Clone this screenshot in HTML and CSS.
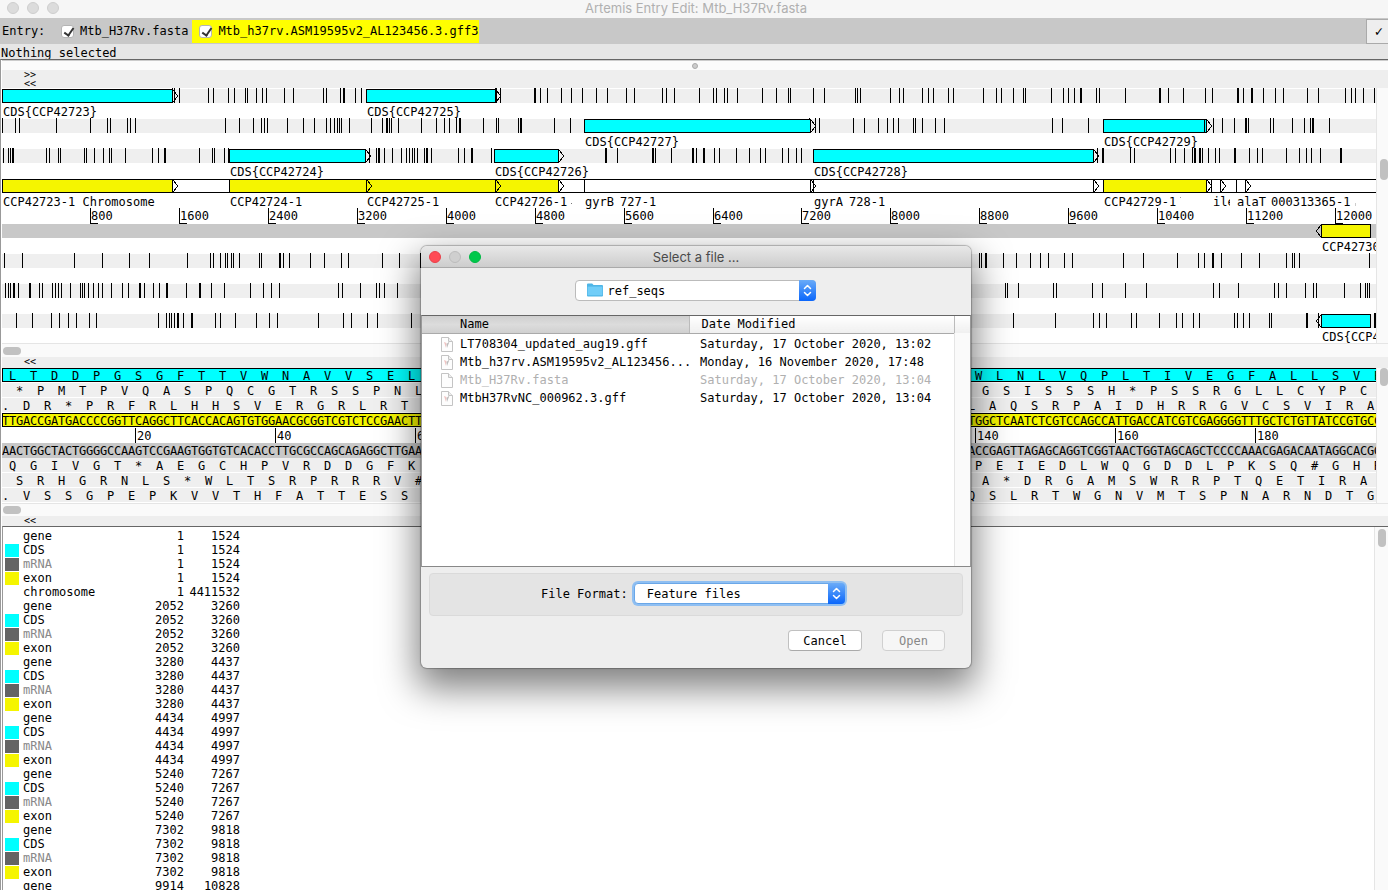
FILE: index.html
```html
<!DOCTYPE html>
<html lang="en">
<head>
<meta charset="utf-8">
<title>Artemis Entry Edit: Mtb_H37Rv.fasta</title>
<link rel="stylesheet" href="styles.css">
</head>
<body>
<div class="app">
  <header class="titlebar">
    <span class="light"></span><span class="light"></span><span class="light"></span>
    <h1 class="window-title">Artemis Entry Edit: Mtb_H37Rv.fasta</h1>
  </header>

  <div class="entrybar">
    <span class="entry-caption">Entry:</span>
    <label class="entry"><input type="checkbox" class="tick" checked>Mtb_H37Rv.fasta</label>
    <label class="entry entry-active"><input type="checkbox" class="tick" checked>Mtb_h37rv.ASM19595v2_AL123456.3.gff3</label>
    <button class="entry-menu" type="button" aria-label="Default entry">✓</button>
  </div>
  <div class="status">Nothing selected</div>

  <main class="panes">
    <div class="splitter"><span class="splitter-dot"></span></div>
    <div class="strip strip-double"><button type="button" class="fold">&gt;&gt;</button><button type="button" class="fold">&lt;&lt;</button></div>

    <section class="view">
      <div class="view-body"><svg class="map" id="map" height="255" aria-label="Feature overview"></svg></div>
      <div class="vscroll"><span class="thumb thumb-map"></span></div>
    </section>
    <div class="hscroll"><span class="hthumb"></span></div>
    <div class="strip"><button type="button" class="fold">&lt;&lt;</button></div>

    <section class="view">
      <div class="view-body seq" id="seq"></div>
      <div class="vscroll"><span class="thumb thumb-seq"></span></div>
    </section>
    <div class="hscroll hscroll-low"><span class="hthumb"></span></div>
    <div class="strip strip-last"><button type="button" class="fold">&lt;&lt;</button></div>

    <section class="features">
      <div class="feature-scroll">
        <table class="feature-table"><tbody id="features"></tbody></table>
      </div>
      <div class="vscroll vscroll-list"><span class="thumb thumb-list"></span></div>
    </section>
  </main>
</div>

<div class="dialog" role="dialog" aria-labelledby="dialog-title">
  <header class="dialog-bar">
    <span class="light light-close"></span><span class="light"></span><span class="light light-zoom"></span>
    <h2 class="dialog-title" id="dialog-title">Select a file ...</h2>
  </header>
  <div class="folder-row">
    <div class="combo combo-folder">
      <select class="combo-select" aria-label="Folder"><option>ref_seqs</option></select>
      <svg class="folder-icon" width="16" height="14" viewBox="0 0 16 14"><path d="M0 1.5Q0 .5 1 .5h4.2l1.3 1.4H15q1 0 1 1V12.500q0 1-1 1H1q-1 0-1-1z" fill="#4eb5e6"/><path d="M.6 3.600h14.800V12.300H.6z" fill="#70cdf8"/></svg>
      <span class="combo-arrows"><svg width="17" height="21" viewBox="0 0 17 21"><path d="M5.500 8.500l3-3 3 3M5.500 12.500l3 3 3-3" fill="none" stroke="#fff" stroke-width="1.500" stroke-linecap="round" stroke-linejoin="round"/></svg></span>
    </div>
  </div>
  <div class="file-list">
    <table class="files">
      <colgroup><col class="col-name"><col class="col-date"><col></colgroup>
      <thead><tr><th class="sorted" scope="col">Name</th><th scope="col">Date Modified</th><th></th></tr></thead>
      <tbody id="files"></tbody>
    </table>
    <div class="file-track"></div>
  </div>
  <div class="format-box">
    <label for="format">File Format:</label>
    <div class="combo combo-format">
      <select class="combo-select" id="format"><option>Feature files</option></select>
      <span class="combo-arrows"><svg width="17" height="21" viewBox="0 0 17 21"><path d="M5.500 8.500l3-3 3 3M5.500 12.500l3 3 3-3" fill="none" stroke="#fff" stroke-width="1.500" stroke-linecap="round" stroke-linejoin="round"/></svg></span>
    </div>
  </div>
  <div class="actions">
    <button type="button" class="btn">Cancel</button>
    <button type="button" class="btn btn-open" disabled>Open</button>
  </div>
</div>
<script src="app.js"></script>
</body>
</html>
```
FILE: styles.css
```css
* { box-sizing: border-box; }
body {
  margin: 0;
  font: 12px/14px "DejaVu Sans Mono", monospace;
  color: #000;
  background: #fff;
  overflow: hidden;
}
button, select, input { font: inherit; color: inherit; margin: 0; }
.app { display: flex; flex-direction: column; height: 100vh; }

.titlebar {
  position: relative;
  display: flex;
  align-items: center;
  gap: 8px;
  height: 18px;
  padding: 0 7px 2px;
  background: #f6f6f6;
}
.light { width: 12px; height: 12px; border-radius: 50%; background: #dcdcdc; border: 1px solid #cecece; }
.window-title, .dialog-title {
  flex: 1;
  margin: 0;
  padding-right: 56px;
  text-align: center;
  font: 13px/16px Inter, sans-serif;
  color: #b0b0b0;
}

.entrybar { display: flex; align-items: center; height: 26px; background: #c8c8c8; }
.entry-caption { width: 54px; padding-left: 2px; }
.entry { display: flex; align-items: center; gap: 6px; height: 23px; padding: 0 4px 0 7px; white-space: nowrap; }
.entry-active { background: #ff0; padding-right: 1px; }
.tick {
  appearance: none;
  flex: none;
  width: 13px;
  height: 13px;
  border: 1px solid #b4b4b4;
  border-radius: 3px;
  background: #fff;
  position: relative;
}
.tick:checked::after {
  content: "";
  position: absolute;
  left: 4px;
  top: 0;
  width: 4px;
  height: 8px;
  border: solid #333;
  border-width: 0 2px 2px 0;
  transform: rotate(35deg);
}
.entry-menu { margin-left: auto; width: 22px; height: 25px; padding: 0 0 0 3px; border: 1px solid #aaa; border-right: 0; background: #eee; font-size: 14px; }
.status { height: 15px; padding: 2px 1px 0; background: #e6e6e6; }

.panes { flex: 1; min-height: 0; display: flex; flex-direction: column; border-top: 1px solid #666; border-left: 1px solid #999; padding-left: 1px; }
.splitter { display: flex; justify-content: center; align-items: center; height: 10px; border-top: 1px solid #ccc; background: #fbfbfb; }
.splitter-dot { width: 6px; height: 6px; border-radius: 50%; background: #ccc; border: 1px solid #aaa; }
.strip { flex: none; display: flex; flex-direction: column; align-items: flex-start; height: 11px; padding-left: 22px; background: #eee; }
.strip-double { height: 18px; }
.strip-last { height: 10px; }
.fold { border: 0; padding: 0; background: none; font-size: 10px; line-height: 9px; height: 9px; }
.view { display: flex; flex: none; }
.view-body { flex: 1; min-width: 0; overflow: hidden; background: #fff; }
.map { display: block; width: 100%; }
.vscroll { position: relative; flex: none; width: 12px; background: #fafafa; border-left: 1px solid #e5e5e5; }
.vscroll-list { width: 14px; }
.thumb { position: absolute; left: 3px; width: 8px; border-radius: 4px; background: #c1c1c1; }
.thumb-map { top: 71px; height: 21px; }
.thumb-seq { top: 0; height: 18px; }
.thumb-list { top: 2px; height: 18px; }
.hscroll { flex: none; height: 14px; padding: 3px 1px; background: #fafafa; border-top: 1px solid #e5e5e5; }
.hscroll-low { height: 13px; padding-top: 2px; }
.hthumb { display: block; width: 18px; height: 8px; border-radius: 4px; background: #c1c1c1; }

.seq-row { display: grid; grid-auto-flow: column; justify-content: start; height: 15px; line-height: 17px; border-bottom: 1px solid #fff; background: #efefef; overflow: hidden; }
.seq-row.bases { grid-auto-columns: 7px; background: #c8c8c8; border-bottom: 0; }
.seq-row.acids { grid-auto-columns: 21px; }
.seq-row.cds, .seq-row.exon { height: 14px; margin-bottom: 1px; border: 1px solid #000; border-right: 0; line-height: 15px; }
.seq-row.cds { background: #0ff; }
.seq-row.exon { background: #f5f500; line-height: 14px; }
.frame-1 { padding-left: 7px; }
.frame-2 { padding-left: 14px; }
.seq-row.cds { padding-left: 6px; }
.seq-row.exon > * { margin-left: -1px; }
.seq-ruler { display: grid; grid-auto-flow: column; grid-auto-columns: 140px; height: 15px; padding-left: 133px; overflow: hidden; }
.seq-mark { position: relative; padding-left: 1px; border-left: 1px solid #000; line-height: 17px; }
.seq-mark::after { content: ""; position: absolute; left: 0; bottom: 0; width: 7px; border-bottom: 1px solid #000; }

.features { flex: 1; min-height: 0; display: flex; background: #fff; border-top: 1px solid #666; border-left: 1px solid #999; }
.feature-scroll { flex: 1; overflow: hidden; padding-top: 2px; }
.feature-table { border-collapse: collapse; table-layout: fixed; width: 237px; }
.feature-table td { height: 14px; padding: 0; line-height: 14px; }
.feature-table td.key-swatch { width: 20px; padding-left: 2px; }
.feature-table td.key { width: 91px; }
.feature-table td.start { width: 70px; text-align: right; }
.feature-table td.end { text-align: right; }
.feature-table td.dim { color: #888; }
.swatch { display: block; width: 14px; height: 13px; }
.swatch.CDS { background: #0ff; }
.swatch.mRNA { background: #646464; }
.swatch.exon { background: #f5f500; }

.dialog {
  position: absolute;
  left: 421px;
  top: 246px;
  width: 550px;
  border-radius: 6px;
  overflow: hidden;
  background: #eee;
  box-shadow: 0 0 1px 1px rgba(0,0,0,.25), 0 16px 36px 4px rgba(0,0,0,.5);
}
.dialog-bar { display: flex; align-items: center; gap: 8px; height: 22px; padding: 0 8px; background: linear-gradient(#e8e8e8, #cdcdcd); border-bottom: 1px solid #aaa; }
.dialog-title { color: #4a4a4a; padding-right: 60px; }
.light-close { background: #ff4b55; border-color: #e8404a; }
.dialog-bar .light { background: #cfcfcf; border-color: #bcbcbc; }
.dialog-bar .light-close { background: #ff4b55; border-color: #e8404a; }
.dialog-bar .light-zoom { background: #00c84b; border-color: #00b844; }
.folder-row { display: flex; justify-content: center; padding: 12px 2px 14px 0; }
.combo { position: relative; height: 21px; }
.combo-select { appearance: none; width: 100%; height: 100%; border: 1px solid #bbb; border-radius: 4px; background: #fff; padding: 0 20px 0 12px; outline: 0; }
.combo-folder { width: 241px; }
.combo-folder .combo-select { padding-left: 32px; }
.folder-icon { position: absolute; left: 12px; top: 3px; }
.combo-arrows { position: absolute; right: 0; top: 0; height: 21px; border-radius: 0 4px 4px 0; background: linear-gradient(#6aabf8, #0a66fb); overflow: hidden; pointer-events: none; }
.combo-format { width: 211px; }
.combo-format .combo-select { border-color: #6aa7e8; box-shadow: 0 0 0 2px #8fbff2; }
.file-list { position: relative; height: 252px; border: 1px solid #999; border-top-color: #666; border-bottom-color: #888; background: #fff; }
.files { width: 100%; border-collapse: collapse; table-layout: fixed; }
.col-name { width: 267px; }
.col-date { width: 265px; }
.files th { height: 17px; padding: 1px 0 0 12px; text-align: left; font-weight: 400; line-height: 15px; background: linear-gradient(#fff, #efefef); border-bottom: 1px solid #aaa; border-right: 1px solid #bbb; }
.files th:last-child { border-right: 0; }
.files th.sorted { padding-left: 38px; background: linear-gradient(#cfcfcf, #dcdcdc 50%, #d0d0d0); }
.files td { height: 18px; padding: 3px 0 0 11px; line-height: 15px; white-space: nowrap; }
.files td:first-child { padding-left: 19px; }
.files tr.off { color: #b0b0b0; }
.file-cell { display: flex; align-items: center; gap: 7px; }
.file-cell svg { flex: none; }
.file-track { position: absolute; right: 0; top: 17px; bottom: 0; width: 16px; background: #fafafa; border-left: 1px solid #e5e5e5; }
.format-box { display: flex; align-items: center; gap: 6px; height: 43px; margin: 6px 8px 0; padding: 0 0 2px 111px; border: 1px solid #dadada; border-radius: 4px; background: #e4e4e4; }
.actions { display: flex; justify-content: flex-end; gap: 20px; padding: 14px 26px 17px; }
.btn { width: 74px; height: 21px; padding: 0; border: 1px solid #c0c0c0; border-bottom-color: #aaa; border-radius: 4px; background: #fff; }
.btn-open { width: 63px; color: #888; background: #f6f6f6; border-color: #d0d0d0; }
```
FILE: app.js
```js
const NS = "http://www.w3.org/2000/svg";
const map = document.getElementById("map");
const OX = 2, OY = 88;

function add(name, attrs, text) {
  const el = document.createElementNS(NS, name);
  for (const k in attrs) el.setAttribute(k, attrs[k]);
  if (text) el.textContent = text;
  map.appendChild(el);
}
const box = (x, y, w, h, fill) => add("rect", { x: x - OX, y: y - OY, width: w, height: h, fill });
const label = (x, y, t) => add("text", { x: x - OX, y: y - OY, "font-size": 12 }, t);
const outlined = (x1, x2, y, fill) => {
  box(x1, y, x2 - x1 + 1, 14, "#000");
  box(x1 + 1, y + 1, x2 - x1 - 1, 12, fill);
};
const arrow = (x, y, dir) => add("path", {
  d: `M${x - OX + .5} ${y - OY}l${5 * dir} 7l${-5 * dir} 7`,
  fill: "none", stroke: "#000", "shape-rendering": "crispEdges"
});

/* stop codon positions, one list per reading frame, keyed by the frame's top edge */
const lanes = {
  89: "172 174 179 208 213 228 234 245 247 256 262 266 284 293 323 326 340 343 344 355 361 495 496 500 534 535 540 547 561 571 582 596 607 626 634 662 666 674 699 713 716 724 727 737 762 776 788 790 813 824 855 857 860 890 899 903 922 928 933 948 953 983 996 1001 1013 1023 1025 1051 1063 1068 1074 1080 1081 1096 1099 1125 1159 1160 1168 1183 1205 1212 1237 1238 1243 1251 1252 1263 1275 1283 1307 1318 1345 1351 1355 1363 1374",
  119: "2 15 19 56 90 107 110 127 130 135 225 239 253 261 264 267 287 303 314 326 330 334 337 339 341 349 371 382 386 387 389 391 398 421 436 444 449 456 459 460 483 496 498 518 520 521 554 570 809 815 819 853 864 878 887 893 898 913 915 922 935 944 1052 1062 1088 1213 1222 1234 1245 1246 1248 1270 1273 1292 1304 1310 1312 1313 1329",
  149: "3 8 10 12 13 46 49 58 60 84 86 94 103 109 111 125 152 158 164 165 199 212 214 224 228 369 376 378 379 384 392 401 406 409 412 414 417 424 426 427 431 458 464 471 472 491 605 606 617 652 653 655 671 692 693 696 703 704 714 719 736 749 760 765 782 788 796 801 1097 1102 1103 1130 1134 1170 1175 1184 1192 1194 1195 1199 1200 1202 1208 1215 1219 1234 1235 1249 1257 1262 1286 1299 1306 1311 1320 1340 1341",
  254: "4 22 74 102 129 149 187 210 213 220 225 227 231 233 239 259 261 279 280 283 289 310 324 341 348 382 399 420 979 981 985 986 1003 1016 1030 1040 1048 1064 1072 1123 1143 1177 1198 1204 1212 1213 1221 1241 1259 1286 1292 1294 1299 1369",
  284: "5 8 10 13 14 18 29 30 39 42 52 55 58 61 70 80 82 84 88 93 98 102 111 122 128 139 140 144 153 159 166 167 186 199 200 211 224 250 263 271 279 338 342 360 376 379 384 397 1005 1007 1018 1053 1056 1092 1102 1125 1146 1213 1219 1238 1274 1278 1286 1305 1313 1316 1344 1360 1365 1367 1369",
  314: "16 32 51 59 68 76 89 96 158 166 169 171 174 177 178 183 191 192 215 220 235 256 269 277 318 343 351 367 377 411 1013 1055 1093 1099 1106 1131 1136 1159 1176 1182 1193 1199 1234 1237 1243 1249 1269 1271 1306 1307 1318 1374 1375"
};
for (const top in lanes) {
  const y = +top;
  add("rect", { x: 0, y: y - OY, width: "100%", height: 14, fill: "#efefef" });
  lanes[top].split(" ").forEach(x => box(+x, y - 1, 1, 15, "#000"));
}

/* coding sequences */
[[2, 172, 89, "42723"], [366, 495, 89, "42725"], [584, 810, 119, "42727"], [1103, 1206, 119, "42729"],
 [229, 365, 149, "42724"], [494, 558, 149, "42726"], [813, 1093, 149, "42728"]].forEach(([a, b, y, id]) => {
  outlined(a, b, y, "#0ff");
  arrow(b, y, 1);
  label(a + 1, y + 27, `CDS{CCP${id}}`);
});
box(1204, 119, 1, 14, "#000");
outlined(1321, 1370, 314, "#0ff");
arrow(1321, 314, -1);
label(1322, 341, "CDS{CCP4");

/* forward strand */
add("rect", { x: 0, y: 91, width: "100%", height: 1, fill: "#000" });
add("rect", { x: 0, y: 104, width: "100%", height: 1, fill: "#000" });
[[2, 172], [229, 366], [366, 495], [495, 558], [1103, 1206]].forEach(([a, b]) => outlined(a, b, 179, "#f5f500"));
[584, 810, 813, 1093, 1211, 1220, 1236, 1245].forEach(x => box(x, 179, 1, 14, "#000"));
[172, 366, 495, 558, 810, 1093, 1206, 1220, 1245].forEach(x => arrow(x, 179, 1));
[[3, "CCP42723-1 Chromosome"], [230, "CCP42724-1"], [367, "CCP42725-1"], [495, "CCP42726-1"], [585, "gyrB"], [620, "727-1"],
 [814, "gyrA"], [849, "728-1"], [1104, "CCP42729-1"], [1213, "ile"], [1237, "alaT"], [1271, "000313365-1"]]
  .forEach(([x, t]) => label(x, 206, t));
box(1230, 196, 6, 12, "#fff");
box(571, 203, 1, 1, "#777");
box(1180, 197, 1, 1, "#999");
box(1355, 203, 1, 3, "#ccc");

/* scale */
[90, 179, 268, 357, 446, 535, 624, 713, 801, 890, 979, 1068, 1157, 1246, 1335].forEach((x, i) => {
  box(x, 208, 1, 16, "#000");
  box(x, 223, 8, 1, "#000");
  label(x + 1, 220, String((i + 1) * 800));
});

/* reverse strand */
add("rect", { x: 0, y: 136, width: "100%", height: 14, fill: "#c8c8c8" });
outlined(1321, 1370, 224, "#f5f500");
arrow(1321, 224, -1);
label(1322, 251, "CCP42730");

/* sequence view */
const dna = "TTGACCGATGACCCCGGTTCAGGCTTCACCACAGTGTGGAACGCGGTCGTCTCCGAACTT" +
  "AACGGCGACCCTAAGGTTGACGACGGACCCAGCAGTGATGCTAATCTCAGCGCTCCGCTGACCCCTCAGCAAAGGGCT" +
  "TGGCTCAATCTCGTCCAGCCATTGACCATCGTCGAGGGGTTTGCTCTGTTATCCGTGCCG";
const pair = { A: "T", T: "A", G: "C", C: "G" };
const comp = [...dna].map(b => pair[b]).join("");
const order = "TCAG";
const code = "FFLLSSSSYY#+CC*WLLLLPPPPHHQQRRRRIIIMTTTTNNKKSSRRVVVVAAAADDEEGGGG";
const translate = c => code[order.indexOf(c[0]) * 16 + order.indexOf(c[1]) * 4 + order.indexOf(c[2])];

function acids(frame, reverse) {
  const out = frame === 2 ? ["."] : [];
  for (let i = frame; i + 3 <= dna.length; i += 3) {
    const c = reverse ? [...comp.slice(i, i + 3)].reverse().join("") : dna.slice(i, i + 3);
    out.push(translate(c));
  }
  return out;
}
const seq = document.getElementById("seq");
function row(cls, chars) {
  const div = document.createElement("div");
  div.className = "seq-row " + cls;
  for (const ch of chars) {
    const s = document.createElement("span");
    s.textContent = ch;
    div.appendChild(s);
  }
  seq.appendChild(div);
}
row("acids frame-1 cds", acids(0, false));
row("acids frame-2", acids(1, false));
row("acids", acids(2, false));
row("bases exon", dna);
const ruler = document.createElement("div");
ruler.className = "seq-ruler";
for (let n = 20; n <= 180; n += 20) {
  const m = document.createElement("span");
  m.className = "seq-mark";
  m.textContent = n;
  ruler.appendChild(m);
}
seq.appendChild(ruler);
row("bases", comp);
row("acids frame-1", acids(0, true));
row("acids frame-2", acids(1, true));
row("acids", acids(2, true));

/* feature list */
const rows = [];
[[1, 1524], [2052, 3260], [3280, 4437], [4434, 4997], [5240, 7267], [7302, 9818], [9914, 10828]].forEach(([a, b], i) => {
  ["gene", "CDS", "mRNA", "exon"].forEach(k => rows.push([k, a, b]));
  if (i === 0) rows.push(["chromosome", 1, 4411532]);
});
document.getElementById("features").innerHTML = rows.map(([k, a, b]) =>
  `<tr><td class="key-swatch"><span class="swatch ${k}"></span></td><td class="key${k === "mRNA" ? " dim" : ""}">${k}</td><td class="start">${a}</td><td class="end">${b}</td></tr>`).join("");

/* files in the chooser */
const page = '<path d="M.5 .5h7l4 4v10h-11z" fill="#fdfdfd" stroke="#c4c4c4"/><path d="M7.500 .5v4h4" fill="#eee" stroke="#c4c4c4"/>';
const mark = '<path d="M3 5l2.500 1-.5 5z" fill="#efc4c2"/><path d="M8.500 4.500L6 11 5.500 7z" fill="#bbb"/>';
document.getElementById("files").innerHTML = [
  ["LT708304_updated_aug19.gff", "Saturday, 17 October 2020, 13:02"],
  ["Mtb_h37rv.ASM19595v2_AL123456...", "Monday, 16 November 2020, 17:48"],
  ["Mtb_H37Rv.fasta", "Saturday, 17 October 2020, 13:04", true],
  ["MtbH37RvNC_000962.3.gff", "Saturday, 17 October 2020, 13:04"]
].map(([n, d, off]) =>
  `<tr class="${off ? "off" : ""}"><td><div class="file-cell"><svg width="12" height="15" viewBox="0 0 12 15">${page}${off ? "" : mark}</svg>${n}</div></td><td>${d}</td><td></td></tr>`).join("");
```
